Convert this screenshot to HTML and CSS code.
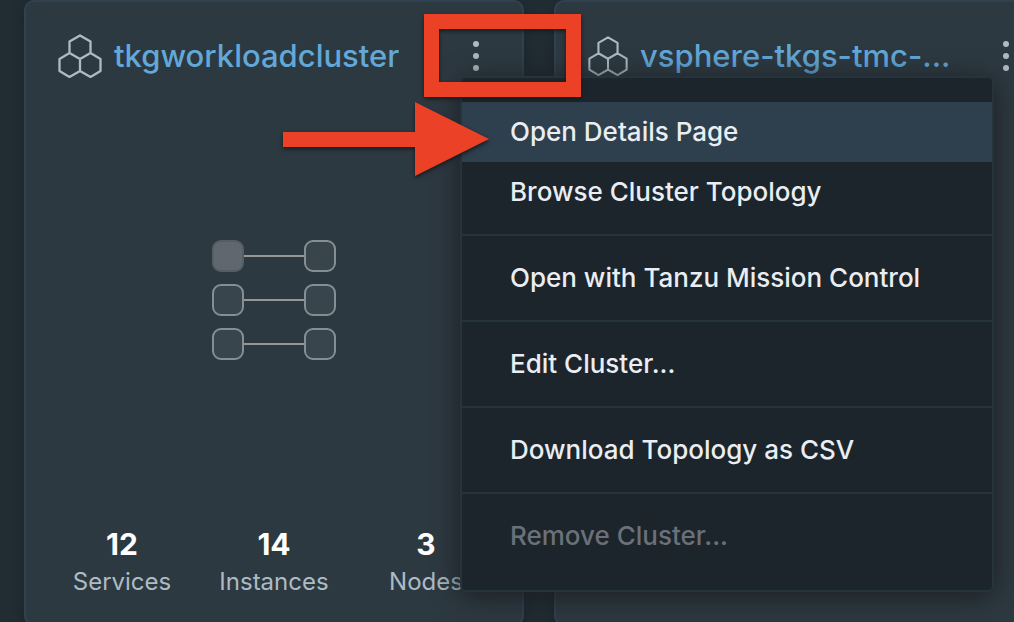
FILE: index.html
```html
<!DOCTYPE html>
<html lang="en">
<head>
<meta charset="utf-8">
<meta name="viewport" content="width=device-width, initial-scale=1">
<title>Clusters</title>
<link rel="stylesheet" href="styles.css">
</head>
<body>
<svg class="symbols" aria-hidden="true">
  <symbol id="cluster" viewBox="0 0 44 44">
    <path d="M22 1.500 32.500 7.500V19L22 25 11.500 19V7.500ZM11.500 19 22 25V37L11.500 43 1.500 37V25ZM32.500 19 42.500 25V37L32.500 43 22 37V25Z" fill="none" stroke="currentColor" stroke-width="2.300" stroke-linejoin="round"/>
  </symbol>
  <symbol id="dots" viewBox="0 0 8 32">
    <circle cx="4" cy="4" r="3"/><circle cx="4" cy="16" r="3"/><circle cx="4" cy="28" r="3"/>
  </symbol>
</svg>
<main class="clusters">
  <article class="card">
    <header class="card-header">
      <svg class="cluster-icon" aria-hidden="true"><use href="#cluster"/></svg>
      <h2 class="card-title"><a class="card-link" href="#tkgworkloadcluster">tkgworkloadcluster</a></h2>
      <div class="actions">
        <button class="more" type="button" aria-label="Cluster actions" aria-expanded="true"><svg class="more-icon" aria-hidden="true"><use href="#dots"/></svg></button>
        <div class="menu" role="menu">
          <div class="menu-group">
            <button class="menu-item active" type="button" role="menuitem">Open Details Page</button>
            <button class="menu-item" type="button" role="menuitem">Browse Cluster Topology</button>
          </div>
          <div class="menu-group"><button class="menu-item" type="button" role="menuitem">Open with Tanzu Mission Control</button></div>
          <div class="menu-group"><button class="menu-item" type="button" role="menuitem">Edit Cluster...</button></div>
          <div class="menu-group"><button class="menu-item" type="button" role="menuitem">Download Topology as CSV</button></div>
          <div class="menu-group"><button class="menu-item" type="button" role="menuitem" disabled>Remove Cluster...</button></div>
        </div>
      </div>
    </header>
    <div class="topology">
      <div class="link-row"><span class="node filled"></span><span class="wire"></span><span class="node"></span></div>
      <div class="link-row"><span class="node"></span><span class="wire"></span><span class="node"></span></div>
      <div class="link-row"><span class="node"></span><span class="wire"></span><span class="node"></span></div>
    </div>
    <dl class="stats">
      <div class="stat"><dt class="stat-label">Services</dt><dd class="stat-value">12</dd></div>
      <div class="stat"><dt class="stat-label">Instances</dt><dd class="stat-value">14</dd></div>
      <div class="stat"><dt class="stat-label">Nodes</dt><dd class="stat-value">3</dd></div>
    </dl>
  </article>
  <article class="card">
    <header class="card-header">
      <svg class="cluster-icon small" aria-hidden="true"><use href="#cluster"/></svg>
      <h2 class="card-title"><a class="card-link" href="#vsphere-tkgs-tmc">vsphere-tkgs-tmc-...</a></h2>
      <div class="actions">
        <button class="more" type="button" aria-label="Cluster actions"><svg class="more-icon" aria-hidden="true"><use href="#dots"/></svg></button>
      </div>
    </header>
  </article>
</main>
<svg class="callout" viewBox="0 0 310 176" aria-hidden="true">
  <rect x="151.500" y="11.500" width="142" height="68"/>
  <path d="M3 122H135V92L209 129 135 166V137H3Z"/>
</svg>
</body>
</html>
```
FILE: styles.css
```css
* {
  box-sizing: border-box;
}

body {
  margin: 0;
  height: 100vh;
  overflow: hidden;
  position: relative;
  background: #212c33;
  color: #adbbc4;
  font-family: Inter, "Open Sans", sans-serif;
  font-size: 24px;
}

button {
  margin: 0;
  border: 0;
  background: none;
  color: inherit;
  font: inherit;
}

.symbols {
  display: none;
}

.clusters {
  display: grid;
  grid-template-columns: repeat(2, minmax(500px, 1fr));
  gap: 30px;
  padding: 0 24px;
}

.card {
  display: flex;
  flex-direction: column;
  justify-content: space-between;
  padding: 32px 20px 26px;
  border: 2px solid #304150;
  border-radius: 10px;
  background: #2d3941;
  box-shadow: 0 4px 12px #1b252b;
}

.card-header {
  display: flex;
  align-items: center;
  gap: 12px;
  height: 44px;
  padding: 0 6px 0 12px;
}

.cluster-icon {
  flex: none;
  width: 44px;
  height: 44px;
  color: #adbbc4;
}

.cluster-icon.small {
  width: 40px;
  height: 40px;
}

.card-title {
  flex: 1;
  min-width: 0;
  margin: 0;
  font-size: 31px;
  font-weight: 500;
  line-height: 40px;
  white-space: nowrap;
}

.card-link {
  color: #62a8d8;
  text-decoration: none;
}

.actions {
  position: relative;
}

.more {
  display: flex;
  align-items: center;
  justify-content: center;
  width: 40px;
  height: 44px;
  padding: 0;
}

.more-icon {
  width: 8px;
  height: 32px;
  fill: #adbbc4;
}

.menu {
  position: absolute;
  z-index: 2;
  top: 42px;
  left: 4px;
  width: 534px;
  padding: 12px 0;
  border: 2px solid #25333b;
  border-radius: 6px;
  background: #1b252b;
  box-shadow: 0 4px 28px #1b1e22;
}

.menu-group {
  padding: 12px 0;
}

.menu-group + .menu-group {
  border-top: 2px solid #25333b;
}

.menu-item {
  display: block;
  width: 100%;
  height: 60px;
  padding: 0 48px;
  color: #eaedf2;
  font-size: 26px;
  font-weight: 500;
  line-height: 60px;
  text-align: left;
  white-space: nowrap;
}

.menu-item.active {
  background: #2e3f4e;
}

.menu-item:disabled {
  color: #6b7079;
}

.topology {
  display: grid;
  gap: 12px;
  justify-content: center;
  margin: 162px 0 166px;
}

.link-row {
  display: flex;
  align-items: center;
}

.node {
  width: 32px;
  height: 32px;
  border: 2px solid #858e92;
  border-radius: 9px;
  background: #38454c;
}

.node.filled {
  border-color: #555e66;
  background: #61676f;
}

.wire {
  width: 60px;
  height: 2px;
  background: #999796;
}

.stats {
  display: grid;
  grid-template-columns: repeat(3, 1fr);
  margin: 0;
  text-align: center;
}

.stat {
  display: flex;
  flex-direction: column-reverse;
  gap: 4px;
}

.stat-label {
  line-height: 32px;
}

.stat-value {
  margin: 0;
  color: #fff;
  font-size: 30px;
  font-weight: 700;
  line-height: 36px;
}

.callout {
  position: absolute;
  z-index: 3;
  top: 10px;
  left: 280px;
  width: 310px;
  height: 176px;
  pointer-events: none;
  fill: #eb4126;
  filter: drop-shadow(0 2px 2px #15191c);
}

.callout rect {
  fill: none;
  stroke: #eb4126;
  stroke-width: 15px;
}
```
